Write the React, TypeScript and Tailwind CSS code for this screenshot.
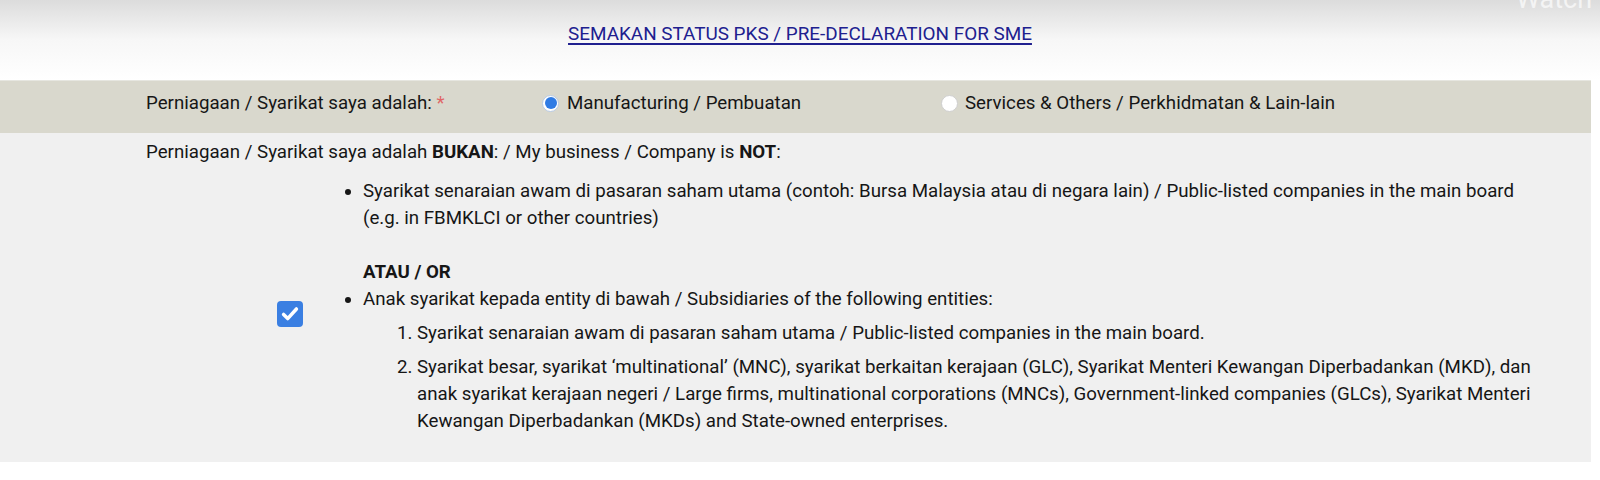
import React from "react";

function Radio({ checked }: { checked?: boolean }) {
  if (checked) {
    return (
      <span className="flex h-[17px] w-[17px] shrink-0 items-center justify-center rounded-full border border-[#b8cae4] bg-white">
        <span className="h-[12px] w-[12px] rounded-full bg-[#2f7be4]" />
      </span>
    );
  }
  return <span className="h-[17px] w-[17px] shrink-0 rounded-full border border-[#cfcfcf] bg-white" />;
}

export default function App() {
  return (
    <div className="relative h-[480px] w-[1600px] overflow-hidden bg-white font-['Roboto','Liberation_Sans',sans-serif] text-[18.7px] leading-[27px] text-[#161616]">
      <div className="absolute left-[1516px] top-[-17px] text-[27px] leading-[32px] text-[#f4f4f4]">Watch</div>

      <div className="flex h-[80px] justify-center bg-gradient-to-b from-[#dcdcdc] via-[#f7f7f7] to-white pt-[21px]">
        <a className="h-[26px] text-[18.9px] leading-[26px] text-[#20208f] underline decoration-[1.5px] underline-offset-[3px]">
          SEMAKAN STATUS PKS / PRE-DECLARATION FOR SME
        </a>
      </div>

      <div className="w-[1591px]">
        <div className="flex h-[53px] items-center border-t border-[#e6e6e0] bg-[#d9d8cd] pb-[8px]">
          <div className="w-[542px] pl-[146px]">
            Perniagaan / Syarikat saya adalah: <span className="text-[#e06666]">*</span>
          </div>
          <label className="flex w-[399px] items-center gap-[8px]">
            <Radio checked />
            <span>Manufacturing / Pembuatan</span>
          </label>
          <label className="flex items-center gap-[7px]">
            <Radio />
            <span>Services &amp; Others / Perkhidmatan &amp; Lain-lain</span>
          </label>
        </div>

        <div className="bg-[#f0f0f0] pr-[39px] pt-[6px]">
          <div className="pl-[146px]">
            Perniagaan / Syarikat saya adalah <b className="font-bold">BUKAN</b>: / My business / Company is <b className="font-bold">NOT</b>:
          </div>
          <div className="flex items-center">
            <div className="w-[323px] shrink-0 pl-[277px]">
              <span className="flex h-[26px] w-[26px] items-center justify-center rounded-[4px] bg-[#3a7fe2]">
                <svg viewBox="0 0 24 24" className="h-[22px] w-[22px]" fill="none" stroke="white" strokeWidth="3.8" strokeLinecap="round" strokeLinejoin="round">
                  <path d="M5 12.5l4.5 4.5L19 6.5" />
                </svg>
              </span>
            </div>
            <div className="min-w-0 flex-1 pb-[27px] pt-[12px]">
              <ul className="list-disc pl-[40px]">
                <li>
                  Syarikat senaraian awam di pasaran saham utama (contoh: Bursa Malaysia atau di negara lain) / Public-listed companies in the main board (e.g. in FBMKLCI or other countries)
                  <br />
                  <br />
                  <b className="font-bold">ATAU / OR</b>
                </li>
                <li>
                  Anak syarikat kepada entity di bawah / Subsidiaries of the following entities:
                  <ol className="mt-[7px] flex list-decimal flex-col gap-[7px] pl-[54px]">
                    <li>Syarikat senaraian awam di pasaran saham utama / Public-listed companies in the main board.</li>
                    <li>
                      Syarikat besar, syarikat ‘multinational’ (MNC), syarikat berkaitan kerajaan (GLC), Syarikat Menteri Kewangan Diperbadankan (MKD), dan anak syarikat kerajaan negeri / Large firms, multinational corporations (MNCs), Government-linked companies (GLCs), Syarikat Menteri Kewangan Diperbadankan (MKDs) and State-owned enterprises.
                    </li>
                  </ol>
                </li>
              </ul>
            </div>
          </div>
        </div>
      </div>
    </div>
  );
}
